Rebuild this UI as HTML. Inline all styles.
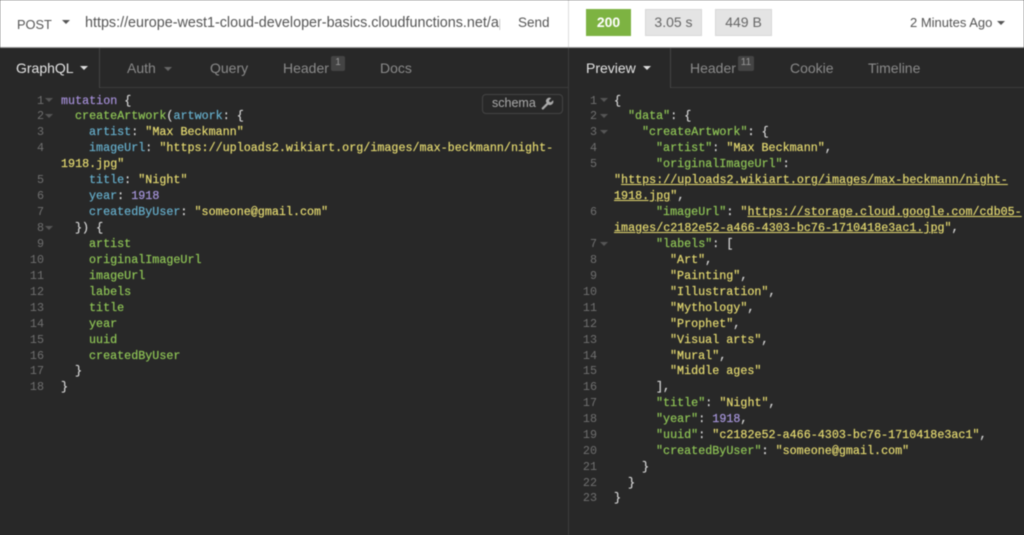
<!DOCTYPE html>
<html><head><meta charset="utf-8">
<style>
html,body{margin:0;padding:0;width:1024px;height:535px;overflow:hidden;background:#282828}
#r{position:relative;width:1024px;height:535px;overflow:hidden;background:#282828;filter:blur(.4px);font-family:"Liberation Sans",sans-serif}
.a{position:absolute;white-space:pre}
.u{font-size:14px;line-height:20px}
.c{font:11.72px/16px "Liberation Mono",monospace;color:#d8d8d8;-webkit-text-stroke:.2px currentColor}
.n{color:#6f6f6f;text-align:right;width:24px;-webkit-text-stroke:0}
.p{color:#8fc556}.k{color:#66aecb}.s{color:#e4d970}.v{color:#a796dc}.m{color:#a58fd8}
.l{text-decoration:underline}
.f{width:0;height:0;border-left:4px solid transparent;border-right:4px solid transparent;border-top:4px solid #555}
.t{width:0;height:0;border-left:4px solid transparent;border-right:4px solid transparent;border-top:4px solid #555}
.b{position:absolute;background:#e4e4e4;border:1px solid #d8d8d8;box-sizing:border-box;text-align:center;color:#666;font-size:14px;line-height:25px;height:27px;top:9px}
.bd{position:absolute;background:#444;color:#999;font-size:10px;line-height:14px;height:15px;text-align:center;border-radius:2px;top:56px}
</style></head><body><div id="r">
<div class="a" style="left:0;top:0;width:1024px;height:47px;background:#fff"></div>
<div class="a" style="left:568px;top:0;width:1px;height:535px;background:#dcdcdc"></div>
<div class="a" style="left:568px;top:47px;width:1px;height:488px;background:#3c3c3c"></div>
<div class="a" style="left:0;top:47px;width:1024px;height:1px;background:#999"></div>
<div class="a" style="left:0;top:87px;width:1024px;height:1px;background:#3b3b3b"></div>
<div class="a" style="left:99px;top:48px;width:1px;height:40px;background:#444"></div>
<div class="a" style="left:670px;top:48px;width:1px;height:40px;background:#444"></div>
<div class="a" style="left:0;top:87px;width:99px;height:1px;background:#282828"></div>
<div class="a" style="left:569px;top:87px;width:101px;height:1px;background:#282828"></div>

<div class="a u" style="left:17px;top:15px;color:#555;font-size:12.8px">POST</div>
<div class="t a" style="left:62px;top:20px"></div>
<div class="a u" style="left:85px;top:13px;overflow:hidden;color:#555;width:415px;font-size:14.35px">https://europe-west1-cloud-developer-basics.cloudfunctions.net/api</div>
<div class="a u" style="left:518px;top:13px;color:#555;font-size:13.5px">Send</div>

<div class="a" style="left:586px;top:9px;width:45px;height:27px;background:#7db342;color:#fff;font-weight:bold;font-size:14px;line-height:27px;text-align:center">200</div>
<div class="b" style="left:645px;width:57px">3.05 s</div>
<div class="b" style="left:715px;width:57px">449 B</div>
<div class="a" style="left:910px;top:14px;color:#555;font-size:13px;line-height:18px">2 Minutes Ago</div>
<div class="t a" style="left:997px;top:21px"></div>

<div class="a u" style="left:16px;top:58px;color:#e4e4e4">GraphQL</div>
<div class="t a" style="left:80px;top:66px;border-top-color:#ddd"></div>
<div class="a u" style="left:127px;top:58px;color:#8a8a8a">Auth</div>
<div class="t a" style="left:164px;top:67px;border-top-color:#666"></div>
<div class="a u" style="left:210px;top:58px;color:#8a8a8a">Query</div>
<div class="a u" style="left:283px;top:58px;color:#8a8a8a">Header</div>
<div class="bd" style="left:331px;width:14px">1</div>
<div class="a u" style="left:380px;top:58px;color:#8a8a8a">Docs</div>

<div class="a u" style="left:586px;top:58px;color:#e4e4e4">Preview</div>
<div class="t a" style="left:643px;top:66px;border-top-color:#ddd"></div>
<div class="a u" style="left:690px;top:58px;color:#8a8a8a">Header</div>
<div class="bd" style="left:738px;width:16px">11</div>
<div class="a u" style="left:790px;top:58px;color:#8a8a8a">Cookie</div>
<div class="a u" style="left:868px;top:58px;color:#8a8a8a">Timeline</div>

<div class="a" style="left:482px;top:94px;width:81px;height:20px;box-sizing:border-box;border:1px solid #444;border-radius:4px"></div>
<div class="a" style="left:492px;top:95px;color:#aaa;font-size:12.5px;line-height:17px">schema</div>
<svg class="a" style="left:541px;top:97px" width="13" height="13" viewBox="0 0 13 13"><path d="M1 10.6 L5.6 6 A3.4 3.4 0 0 1 10.2 1.2 L8 3.4 L8.4 4.9 L9.9 5.3 L12 3.2 A3.4 3.4 0 0 1 7.2 7.6 L2.6 12.2 A1.1 1.1 0 0 1 1 10.6 Z" fill="#aaa"/></svg>

<!-- left editor -->
<div class="a c n" style="left:20px;top:93px">1</div><div class="a c" style="left:61px;top:93px"><span class="m">mutation</span> {</div>
<div class="a c n" style="left:20px;top:108px">2</div><div class="a c" style="left:75px;top:108px"><span class="p">createArtwork</span>(<span class="k">artwork</span>: {</div>
<div class="a c n" style="left:20px;top:124px">3</div><div class="a c" style="left:89px;top:124px"><span class="k">artist</span>: <span class="s">"Max Beckmann"</span></div>
<div class="a c n" style="left:20px;top:140px">4</div><div class="a c" style="left:89px;top:140px"><span class="k">imageUrl</span>: <span class="s">"https://uploads2.wikiart.org/images/max-beckmann/night-</span></div>
<div class="a c" style="left:61px;top:156px"><span class="s">1918.jpg"</span></div>
<div class="a c n" style="left:20px;top:172px">5</div><div class="a c" style="left:89px;top:172px"><span class="k">title</span>: <span class="s">"Night"</span></div>
<div class="a c n" style="left:20px;top:188px">6</div><div class="a c" style="left:89px;top:188px"><span class="k">year</span>: <span class="v">1918</span></div>
<div class="a c n" style="left:20px;top:204px">7</div><div class="a c" style="left:89px;top:204px"><span class="k">createdByUser</span>: <span class="s">"someone@gmail.com"</span></div>
<div class="a c n" style="left:20px;top:220px">8</div><div class="a c" style="left:75px;top:220px">}) {</div>
<div class="a c n" style="left:20px;top:236px">9</div><div class="a c p" style="left:89px;top:236px">artist</div>
<div class="a c n" style="left:20px;top:252px">10</div><div class="a c p" style="left:89px;top:252px">originalImageUrl</div>
<div class="a c n" style="left:20px;top:268px">11</div><div class="a c p" style="left:89px;top:268px">imageUrl</div>
<div class="a c n" style="left:20px;top:284px">12</div><div class="a c p" style="left:89px;top:284px">labels</div>
<div class="a c n" style="left:20px;top:300px">13</div><div class="a c p" style="left:89px;top:300px">title</div>
<div class="a c n" style="left:20px;top:316px">14</div><div class="a c p" style="left:89px;top:316px">year</div>
<div class="a c n" style="left:20px;top:332px">15</div><div class="a c p" style="left:89px;top:332px">uuid</div>
<div class="a c n" style="left:20px;top:348px">16</div><div class="a c p" style="left:89px;top:348px">createdByUser</div>
<div class="a c n" style="left:20px;top:363px">17</div><div class="a c" style="left:75px;top:363px">}</div>
<div class="a c n" style="left:20px;top:379px">18</div><div class="a c" style="left:61px;top:379px">}</div>
<div class="f a" style="left:45px;top:98px"></div>
<div class="f a" style="left:45px;top:114px"></div>
<div class="f a" style="left:45px;top:226px"></div>

<!-- right editor -->
<div class="a c n" style="left:573px;top:93px">1</div><div class="a c" style="left:614px;top:93px">{</div>
<div class="a c n" style="left:573px;top:108px">2</div><div class="a c" style="left:628px;top:108px"><span class="p">"data"</span>: {</div>
<div class="a c n" style="left:573px;top:124px">3</div><div class="a c" style="left:642px;top:124px"><span class="p">"createArtwork"</span>: {</div>
<div class="a c n" style="left:573px;top:140px">4</div><div class="a c" style="left:656px;top:140px"><span class="p">"artist"</span>: <span class="s">"Max Beckmann"</span>,</div>
<div class="a c n" style="left:573px;top:156px">5</div><div class="a c" style="left:656px;top:156px"><span class="p">"originalImageUrl"</span>:</div>
<div class="a c" style="left:614px;top:172px"><span class="s">"<span class="l">https://uploads2.wikiart.org/images/max-beckmann/night-</span></span></div>
<div class="a c" style="left:614px;top:188px"><span class="s"><span class="l">1918.jpg</span>"</span>,</div>
<div class="a c n" style="left:573px;top:204px">6</div><div class="a c" style="left:656px;top:204px"><span class="p">"imageUrl"</span>: <span class="s">"<span class="l">https://storage.cloud.google.com/cdb05-</span></span></div>
<div class="a c" style="left:614px;top:220px"><span class="s"><span class="l">images/c2182e52-a466-4303-bc76-1710418e3ac1.jpg</span>"</span>,</div>
<div class="a c n" style="left:573px;top:236px">7</div><div class="a c" style="left:656px;top:236px"><span class="p">"labels"</span>: [</div>
<div class="a c n" style="left:573px;top:252px">8</div><div class="a c" style="left:670px;top:252px"><span class="s">"Art"</span>,</div>
<div class="a c n" style="left:573px;top:268px">9</div><div class="a c" style="left:670px;top:268px"><span class="s">"Painting"</span>,</div>
<div class="a c n" style="left:573px;top:284px">10</div><div class="a c" style="left:670px;top:284px"><span class="s">"Illustration"</span>,</div>
<div class="a c n" style="left:573px;top:300px">11</div><div class="a c" style="left:670px;top:300px"><span class="s">"Mythology"</span>,</div>
<div class="a c n" style="left:573px;top:316px">12</div><div class="a c" style="left:670px;top:316px"><span class="s">"Prophet"</span>,</div>
<div class="a c n" style="left:573px;top:332px">13</div><div class="a c" style="left:670px;top:332px"><span class="s">"Visual arts"</span>,</div>
<div class="a c n" style="left:573px;top:348px">14</div><div class="a c" style="left:670px;top:348px"><span class="s">"Mural"</span>,</div>
<div class="a c n" style="left:573px;top:363px">15</div><div class="a c" style="left:670px;top:363px"><span class="s">"Middle ages"</span></div>
<div class="a c n" style="left:573px;top:379px">16</div><div class="a c" style="left:656px;top:379px">],</div>
<div class="a c n" style="left:573px;top:395px">17</div><div class="a c" style="left:656px;top:395px"><span class="p">"title"</span>: <span class="s">"Night"</span>,</div>
<div class="a c n" style="left:573px;top:411px">18</div><div class="a c" style="left:656px;top:411px"><span class="p">"year"</span>: <span class="v">1918</span>,</div>
<div class="a c n" style="left:573px;top:427px">19</div><div class="a c" style="left:656px;top:427px"><span class="p">"uuid"</span>: <span class="s">"c2182e52-a466-4303-bc76-1710418e3ac1"</span>,</div>
<div class="a c n" style="left:573px;top:443px">20</div><div class="a c" style="left:656px;top:443px"><span class="p">"createdByUser"</span>: <span class="s">"someone@gmail.com"</span></div>
<div class="a c n" style="left:573px;top:459px">21</div><div class="a c" style="left:642px;top:459px">}</div>
<div class="a c n" style="left:573px;top:475px">22</div><div class="a c" style="left:628px;top:475px">}</div>
<div class="a c n" style="left:573px;top:490px">23</div><div class="a c" style="left:614px;top:490px">}</div>
<div class="f a" style="left:600px;top:98px"></div>
<div class="f a" style="left:600px;top:114px"></div>
<div class="f a" style="left:600px;top:130px"></div>
<div class="f a" style="left:600px;top:242px"></div>
</div></body></html>
